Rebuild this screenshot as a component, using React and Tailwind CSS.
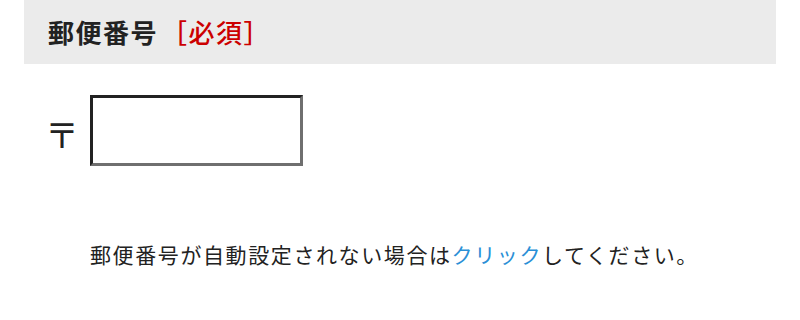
export default function App() {
  return (
    <div
      className="w-[800px] h-[320px] bg-white px-[24px] text-[#222]"
      style={{ fontFamily: '"Noto Sans CJK JP", "Noto Sans", sans-serif' }}
    >
      <div className="h-[64px] bg-[#ebebeb] flex items-center pl-[24px]">
        <h2 className="text-[26px] font-bold tracking-[1.5px] leading-none">
          郵便番号
          <span className="text-[#cc0000] font-medium ml-[3px]">［必須］</span>
        </h2>
      </div>

      <div className="flex items-center mt-[31px] pl-[21px]">
        <span className="text-[34px] leading-none w-[45px] mt-[6px]">〒</span>
        <input
          type="text"
          className="w-[213px] h-[71px] border-[3px] border-t-[#222] border-l-[#222] border-r-[#6f6f6f] border-b-[#6f6f6f] bg-white outline-none px-2 text-[20px]"
        />
      </div>

      <p className="mt-[73px] ml-[66px] text-[21px] leading-[30px] tracking-[1.6px] text-[#222]">
        郵便番号が自動設定されない場合は
        <a href="#" className="text-[#2a8fd6]">クリック</a>
        してください。
      </p>
    </div>
  );
}
